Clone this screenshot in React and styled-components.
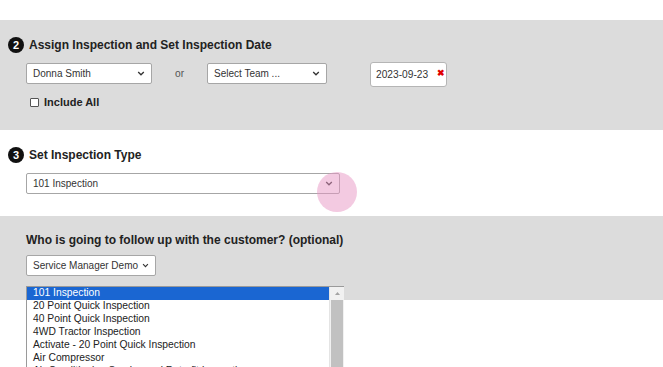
import React from 'react';
import styled, { createGlobalStyle } from 'styled-components';

const GlobalStyle = createGlobalStyle`
  body {
    margin: 0;
    background: #fff;
    font-family: "Liberation Sans", Arial, sans-serif;
    color: #222;
  }
`;

const Page = styled.div`
  position: relative;
  width: 663px;
  height: 367px;
  overflow: hidden;
  padding-top: 20px;
  box-sizing: border-box;
`;

const Section = styled.div`
  background: ${(p) => (p.$grey ? '#dcdcdc' : '#fff')};
  padding: ${(p) => p.$pad || '17px 0 22px 8px'};
`;

const Header = styled.div`
  display: flex;
  align-items: center;
  gap: 5px;
  height: 16px;
  font-size: 12px;
  font-weight: bold;
  color: #222;
  white-space: nowrap;
`;

const Badge = styled.span`
  width: 16px;
  height: 16px;
  border-radius: 50%;
  background: #111;
  color: #fff;
  font-size: 11px;
  font-weight: bold;
  display: flex;
  align-items: center;
  justify-content: center;
`;

const Question = styled.div`
  margin-left: 18px;
  font-size: 12px;
  font-weight: bold;
  line-height: 14px;
  color: #222;
  white-space: nowrap;
`;

const Row = styled.div`
  display: flex;
  align-items: ${(p) => (p.$top ? 'flex-start' : 'center')};
  margin: ${(p) => p.$margin || '10px 0 0 18px'};
`;

const SelectBox = styled.div`
  display: flex;
  align-items: center;
  justify-content: space-between;
  gap: 4px;
  box-sizing: border-box;
  width: ${(p) => p.$width}px;
  height: 21px;
  padding: 0 6px 0 6px;
  background: #fff;
  border: 1px solid #a6a6a6;
  border-radius: 2px;
  font-size: 10px;
  color: #333;
  white-space: nowrap;
`;

const Or = styled.span`
  width: 55px;
  height: 21px;
  line-height: 21px;
  text-align: center;
  font-size: 10.2px;
  color: #555;
`;

const DateBox = styled.div`
  display: flex;
  align-items: flex-start;
  gap: 9px;
  box-sizing: border-box;
  width: 77px;
  height: 25px;
  margin: -1px 0 0 43px;
  padding: 5px 0 0 5px;
  background: #fff;
  border: 1px solid #b5b5b5;
  border-radius: 3px;
  font-size: 10.2px;
  line-height: 14px;
  color: #333;
  white-space: nowrap;
`;

const Clear = styled.span`
  color: #e00000;
  font-size: 9px;
  font-weight: bold;
  line-height: 10px;
`;

const Check = styled.span`
  width: 9px;
  height: 9px;
  box-sizing: border-box;
  margin: 0 5px 0 4px;
  border: 1px solid #555;
  border-radius: 1px;
  background: #fff;
`;

const CheckLabel = styled.span`
  font-size: 11px;
  font-weight: bold;
  line-height: 13px;
  color: #222;
`;

const Notes = styled.div`
  margin: 40px 0 0 26px;
  width: 300px;
  height: 60px;
  border: 1px solid #b5b5b5;
`;

const ListBox = styled.div`
  position: absolute;
  left: 26px;
  top: 286px;
  width: 318px;
  height: 100px;
  display: flex;
  box-sizing: border-box;
  background: #fff;
  border: 1px solid #9a9a9a;
  border-right: none;
`;

const Options = styled.div`
  flex: 1;
`;

const Option = styled.div`
  height: 13px;
  line-height: 12px;
  padding-left: 6px;
  font-size: 10.3px;
  white-space: nowrap;
  background: ${(p) => (p.$active ? '#1a66d2' : 'transparent')};
  color: ${(p) => (p.$active ? '#fff' : '#222')};
`;

const Scrollbar = styled.div`
  width: 14px;
  display: flex;
  flex-direction: column;
  background: #f1f1f1;
  border-left: 1px solid #e4e4e4;
`;

const ScrollBtn = styled.div`
  height: 13px;
  display: flex;
  align-items: center;
  justify-content: center;
  background: #f1f1f1;
`;

const Thumb = styled.div`
  flex: 1;
  margin: 0 1px;
  background: #c1c1c1;
`;

const Tap = styled.span`
  position: absolute;
  left: 317px;
  top: 172px;
  width: 40px;
  height: 40px;
  border-radius: 50%;
  background: rgba(232, 150, 196, 0.5);
`;

const Chevron = () => (
  <svg width="8" height="5" viewBox="0 0 8 5">
    <path d="M1.2 1l2.8 2.8 2.8-2.8" fill="none" stroke="#333" strokeWidth="1.3" />
  </svg>
);

const Select = ({ width, children }) => (
  <SelectBox $width={width}>
    <span>{children}</span>
    <Chevron />
  </SelectBox>
);

const types = [
  '101 Inspection',
  '20 Point Quick Inspection',
  '40 Point Quick Inspection',
  '4WD Tractor Inspection',
  'Activate - 20 Point Quick Inspection',
  'Air Compressor',
  'Air Conditioning Service and Retrofit Inspection',
];

const App = () => (
  <>
    <GlobalStyle />
    <Page>
      <Section $grey $pad="17px 0 21px 8px">
        <Header>
          <Badge>2</Badge>
          Assign Inspection and Set Inspection Date
        </Header>
        <Row $top>
          <Select width={126}>Donna Smith</Select>
          <Or>or</Or>
          <Select width={120}>Select Team ...</Select>
          <DateBox>
            2023-09-23
            <Clear>✖</Clear>
          </DateBox>
        </Row>
        <Row $margin="9px 0 0 18px">
          <Check />
          <CheckLabel>Include All</CheckLabel>
        </Row>
      </Section>

      <Section>
        <Header>
          <Badge>3</Badge>
          Set Inspection Type
        </Header>
        <Row>
          <Select width={314}>101 Inspection</Select>
        </Row>
      </Section>

      <Section $grey $pad="17px 0 24px 8px">
        <Question>Who is going to follow up with the customer? (optional)</Question>
        <Row $margin="8px 0 0 18px">
          <Select width={130}>Service Manager Demo</Select>
        </Row>
      </Section>

      <Notes />

      <Tap />

      <ListBox>
        <Options>
          {types.map((t, i) => (
            <Option key={t} $active={i === 0}>
              {t}
            </Option>
          ))}
        </Options>
        <Scrollbar>
          <ScrollBtn>
            <svg width="5" height="3" viewBox="0 0 5 3">
              <path d="M0 3l2.5-3 2.5 3z" fill="#a3a3a3" />
            </svg>
          </ScrollBtn>
          <Thumb />
        </Scrollbar>
      </ListBox>
    </Page>
  </>
);

export default App;
